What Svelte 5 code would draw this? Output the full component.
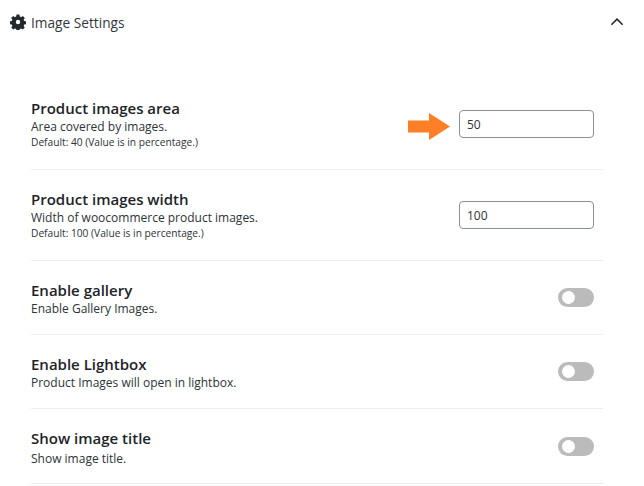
<script>
  const rows = [
    { title: "Product images area", desc: "Area covered by images.", note: "Default: 40 (Value is in percentage.)", value: "50", arrow: true },
    { title: "Product images width", desc: "Width of woocommerce product images.", note: "Default: 100 (Value is in percentage.)", value: "100" },
    { title: "Enable gallery", desc: "Enable Gallery Images." },
    { title: "Enable Lightbox", desc: "Product Images will open in lightbox." },
    { title: "Show image title", desc: "Show image title." }
  ];
</script>

<div class="panel">
  <div class="head">
    <div class="head-title">
      <svg class="gear" viewBox="0 0 16 16" width="16" height="16" aria-hidden="true">
        <path
          fill="#23282d"
          fill-rule="evenodd"
          d="M6.6 0.6h2.8l.4 2a5.4 5.4 0 0 1 1.3.55l1.7-1.15 2 2-1.15 1.7c.24.4.42.85.55 1.3l2 .4v2.8l-2 .4a5.4 5.4 0 0 1-.55 1.3l1.15 1.7-2 2-1.7-1.15a5.4 5.4 0 0 1-1.3.55l-.4 2H6.6l-.4-2a5.4 5.4 0 0 1-1.3-.55L3.2 15.6l-2-2 1.15-1.7a5.4 5.4 0 0 1-.55-1.3l-2-.4V7.4l2-.4c.13-.45.31-.9.55-1.3L1.2 4l2-2 1.7 1.15c.4-.24.85-.42 1.3-.55zM8 5.8a2.2 2.2 0 1 0 0 4.4 2.2 2.2 0 0 0 0-4.4z"
        />
      </svg>
      <span>Image Settings</span>
    </div>
    <svg class="chev" viewBox="0 0 12 8" width="12" height="8" aria-hidden="true">
      <path d="M.3 6.8 6 1.2l5.7 5.6" fill="none" stroke="#23282d" stroke-width="1.6" />
    </svg>
  </div>

  <div class="rows">
    {#each rows as row}
      <div class="row">
        <div class="text">
          <div class="title">{row.title}</div>
          <div class="desc">{row.desc}</div>
          {#if row.note}
            <div class="note">{row.note}</div>
          {/if}
        </div>
        {#if row.value}
          <div class="control">
            {#if row.arrow}
              <svg class="arrow" viewBox="0 0 42 27" width="42" height="27" aria-hidden="true">
                <path fill="#ff7f27" d="M0 7.5h21V0l21 13.5L21 27v-7.5H0z" />
              </svg>
            {/if}
            <input type="text" value={row.value} />
          </div>
        {:else}
          <div class="toggle"><span class="knob"></span></div>
        {/if}
      </div>
    {/each}
  </div>
</div>

<style>
  :global(body) {
    background: #fff;
    font-family: "Open Sans", "Noto Sans", sans-serif;
    color: #23282d;
  }

  .panel {
    width: 644px;
    height: 486px;
    overflow: hidden;
    box-sizing: border-box;
    padding: 0 21px 0 10px;
  }

  .head {
    display: flex;
    justify-content: space-between;
    align-items: center;
    height: 44px;
  }

  .head-title {
    display: flex;
    align-items: center;
    gap: 5px;
    font-size: 13.7px;
    color: #32373c;
  }

  .gear {
    display: block;
  }

  .rows {
    margin: 35px 20px 0 21px;
  }

  .row {
    display: flex;
    justify-content: space-between;
    align-items: center;
    box-sizing: border-box;
    padding: 20px 9px 17px 0;
    border-bottom: 1px solid #eeeeee;
  }

  .row:last-child {
    padding-bottom: 16px;
  }

  .row:last-child .desc {
    margin-top: 4px;
  }

  .title {
    font-size: 15px;
    font-weight: 600;
    line-height: 18px;
    margin-bottom: 2px;
    color: #1d2327;
  }

  .desc {
    font-size: 12px;
    line-height: 16px;
    color: #2c3338;
  }

  .note {
    font-size: 10.2px;
    line-height: 15px;
    margin-bottom: 2px;
    color: #2c3338;
  }

  .control {
    display: flex;
    align-items: center;
    gap: 9px;
    margin-bottom: 3px;
  }

  .arrow {
    display: block;
    margin-top: 4px;
  }

  input {
    box-sizing: border-box;
    width: 135px;
    height: 28px;
    padding: 0 7px;
    border: 1px solid #8c8f94;
    border-radius: 4px;
    background: #fff;
    font-family: inherit;
    font-size: 12px;
    color: #2c3338;
    outline: none;
  }

  .toggle {
    display: flex;
    align-items: center;
    box-sizing: border-box;
    width: 36px;
    height: 19px;
    margin-bottom: 3px;
    padding-left: 4px;
    border-radius: 10px;
    background: #bbbbbb;
  }

  .knob {
    display: block;
    width: 13px;
    height: 13px;
    border-radius: 50%;
    background: #fff;
  }
</style>
